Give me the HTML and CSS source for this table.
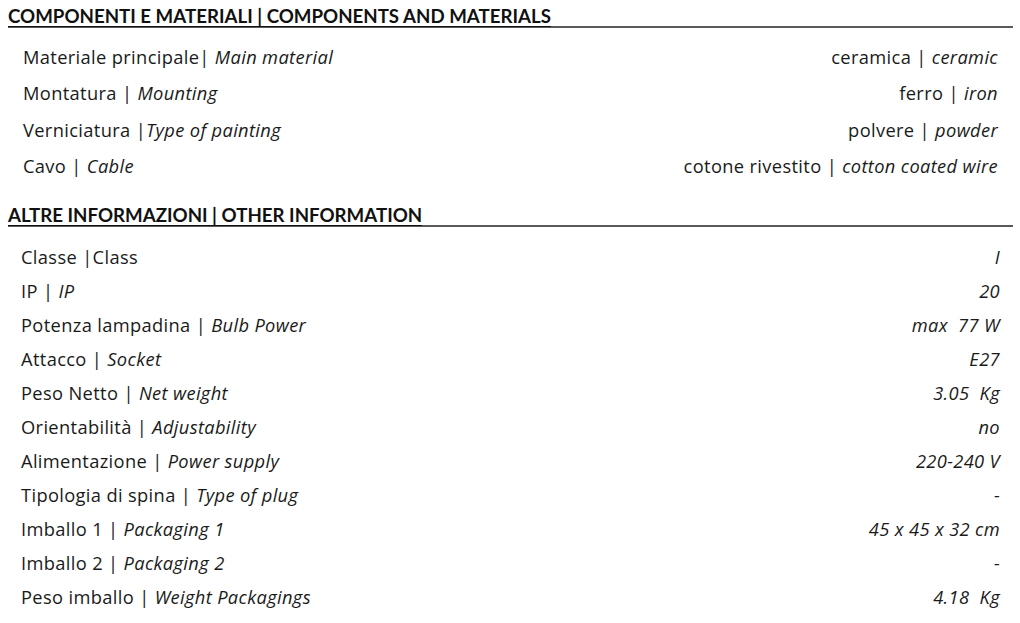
FILE: index.html
```html
<!DOCTYPE html>
<html lang="it">
<head>
<meta charset="utf-8">
<title>Componenti e materiali</title>
<link rel="stylesheet" href="styles.css">
</head>
<body>
<div class="sheet">
  <section class="block block-materials">
    <h2 class="heading"><span>COMPONENTI E MATERIALI | COMPONENTS AND MATERIALS</span></h2>
    <div class="rows">
      <div class="row"><span>Materiale principale| <i>Main material</i></span><span>ceramica | <i>ceramic</i></span></div>
      <div class="row"><span>Montatura | <i>Mounting</i></span><span>ferro | <i>iron</i></span></div>
      <div class="row"><span>Verniciatura |<i>Type of painting</i></span><span>polvere | <i>powder</i></span></div>
      <div class="row"><span>Cavo | <i>Cable</i></span><span>cotone rivestito | <i>cotton coated wire</i></span></div>
    </div>
  </section>
  <section class="block block-info">
    <h2 class="heading"><span>ALTRE INFORMAZIONI | OTHER INFORMATION</span></h2>
    <div class="rows">
      <div class="row"><span>Classe |Class</span><i>I</i></div>
      <div class="row"><span>IP | <i>IP</i></span><i>20</i></div>
      <div class="row"><span>Potenza lampadina | <i>Bulb Power</i></span><i>max&nbsp; 77 W</i></div>
      <div class="row"><span>Attacco | <i>Socket</i></span><i>E27</i></div>
      <div class="row"><span>Peso Netto | <i>Net weight</i></span><i>3.05&nbsp; Kg</i></div>
      <div class="row"><span>Orientabilità | <i>Adjustability</i></span><i>no</i></div>
      <div class="row"><span>Alimentazione | <i>Power supply</i></span><i>220-240 V</i></div>
      <div class="row"><span>Tipologia di spina | <i>Type of plug</i></span><i>-</i></div>
      <div class="row"><span>Imballo 1 | <i>Packaging 1</i></span><i>45 x 45 x 32 cm</i></div>
      <div class="row"><span>Imballo 2 | <i>Packaging 2</i></span><i>-</i></div>
      <div class="row"><span>Peso imballo | <i>Weight Packagings</i></span><i>4.18&nbsp; Kg</i></div>
    </div>
  </section>
</div>
</body>
</html>
```
FILE: styles.css
```css
html, body {
  margin: 0;
  padding: 0;
  background: #ffffff;
}
body {
  font-family: "Open Sans", Lato, "Liberation Sans", sans-serif;
  color: #1a1a1a;
  font-size: 18.3px;
  letter-spacing: 0.35px;
}
.sheet {
  width: 1005px;
  margin-left: 8px;
  padding-top: 6px;
}
.heading {
  margin: 0;
  font-family: Lato, "Open Sans", sans-serif;
  font-size: 18.7px;
  font-weight: 700;
  line-height: 20px;
  letter-spacing: 0;
  color: #111111;
  border-bottom: 2px solid #5a5a5a;
}
.heading span {
  text-decoration: underline;
  text-underline-offset: 3px;
}
.rows {
  display: flex;
  flex-direction: column;
}
.row {
  display: flex;
  justify-content: space-between;
  align-items: center;
  white-space: nowrap;
}
.row i {
  font-style: italic;
}
.block-materials .rows {
  padding: 10px 15px 0 15px;
}
.block-materials .row {
  height: 36.5px;
}
.block-info {
  margin-top: 21px;
}
.block-info .rows {
  padding: 12px 13px 0 13px;
}
.block-info .row {
  height: 34.1px;
}
```
